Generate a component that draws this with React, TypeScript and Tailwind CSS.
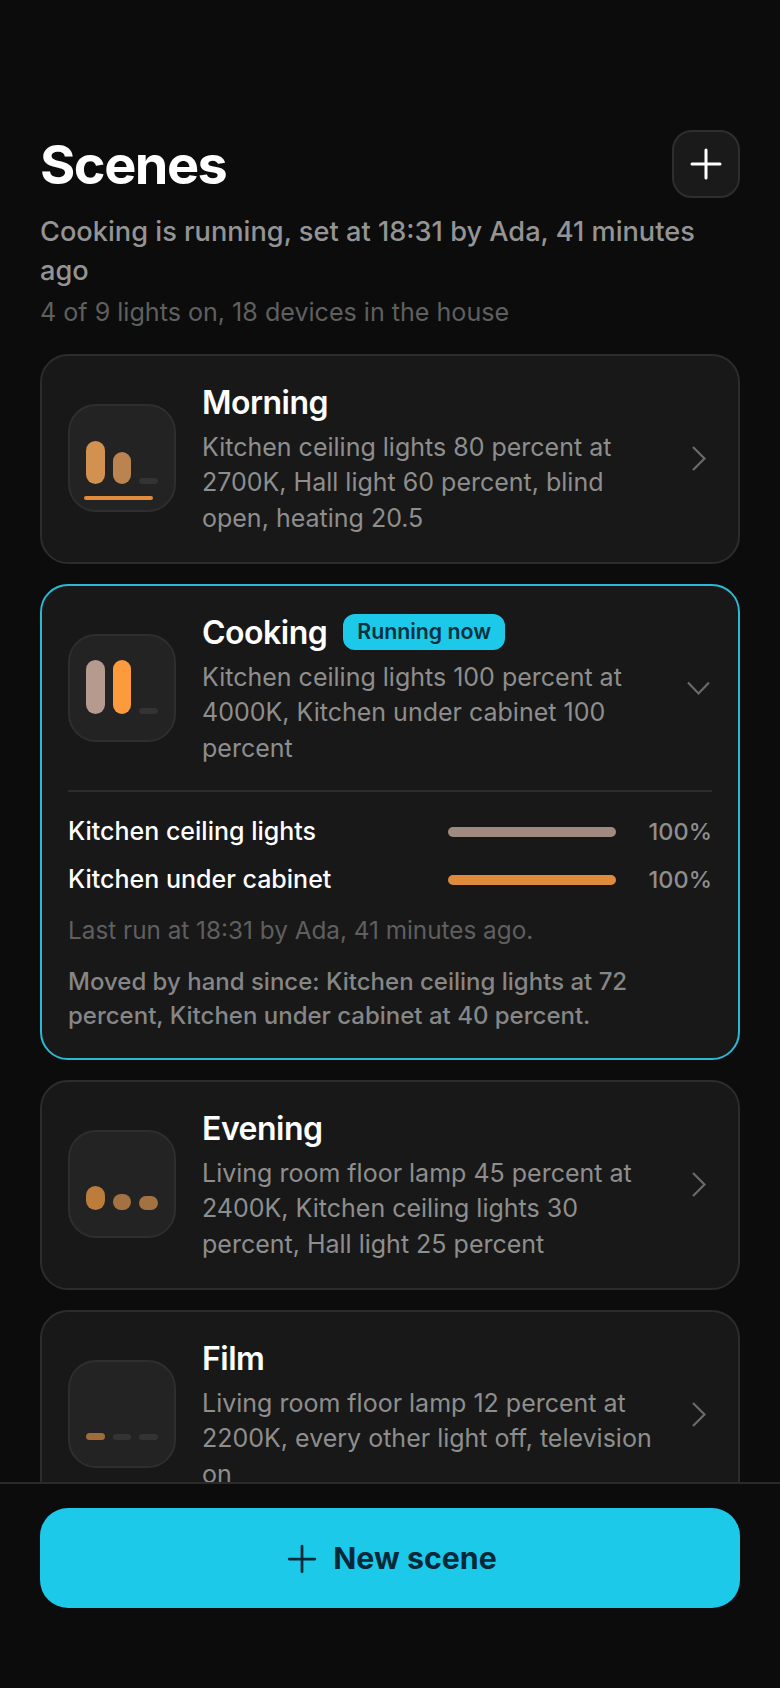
import React from 'react';
import { Plus } from 'lucide-react';

interface Bar {
    height: number;
    color: string;
}

interface Scene {
    name: string;
    detail: string;
    bars: Bar[];
    underline?: boolean;
}

const OFF = '#333334';

const scenes: Record<string, Scene> = {
    morning: {
        name: 'Morning',
        detail: 'Kitchen ceiling lights 80 percent at 2700K, Hall light 60 percent, blind open, heating 20.5',
        bars: [
            { height: 43, color: '#d2914f' },
            { height: 32, color: '#ba8350' },
            { height: 6, color: OFF },
        ],
        underline: true,
    },
    cooking: {
        name: 'Cooking',
        detail: 'Kitchen ceiling lights 100 percent at 4000K, Kitchen under cabinet 100 percent',
        bars: [
            { height: 54, color: '#b59a90' },
            { height: 54, color: '#fb9b3e' },
            { height: 6, color: OFF },
        ],
    },
    evening: {
        name: 'Evening',
        detail: 'Living room floor lamp 45 percent at 2400K, Kitchen ceiling lights 30 percent, Hall light 25 percent',
        bars: [
            { height: 24, color: '#bc7d3c' },
            { height: 16, color: '#a37142' },
            { height: 14, color: '#a37142' },
        ],
    },
    film: {
        name: 'Film',
        detail: 'Living room floor lamp 12 percent at 2200K, every other light off, television on',
        bars: [
            { height: 7, color: '#a06c39' },
            { height: 6, color: OFF },
            { height: 6, color: OFF },
        ],
    },
};

const SceneTile = ({ bars, underline }: { bars: Bar[]; underline?: boolean }) => (
    <div className="relative mt-[22px] flex h-[108px] w-[108px] shrink-0 items-end gap-2 self-start rounded-[28px] border-2 border-[#2e2e2e] bg-[#232323] px-4 pb-[26px]">
        {bars.map((bar, i) => (
            <div key={i} className="w-[18.67px] rounded-[10px]" style={{ height: bar.height, backgroundColor: bar.color }} />
        ))}
        {underline && <div className="absolute bottom-[10px] left-[14px] h-1 w-[69px] rounded-full bg-[#e08c3c]" />}
    </div>
);

const SceneHeader = ({ scene, open, badge }: { scene: Scene; open?: boolean; badge?: string }) => (
    <div className="flex items-center">
        <SceneTile bars={scene.bars} underline={scene.underline} />
        <div className="ml-[26px] min-w-0 flex-1">
            <div className="flex h-10 items-center gap-4">
                <h2 className="mt-[2px] text-[32px] font-semibold tracking-[-0.5px] text-white">{scene.name}</h2>
                {badge && (
                    <span className="flex h-9 items-center rounded-xl bg-[#1dc9e9] px-[14px] text-[21.3px] font-semibold text-[#07303c]">
                        {badge}
                    </span>
                )}
            </div>
            <p className="mt-2 text-[25px] leading-[35.33px] text-[#8e8e8e]">{scene.detail}</p>
        </div>
        <div className="ml-4 shrink-0 translate-x-[1px]">
            {open ? (
                <svg width="28" height="28" viewBox="0 0 28 28" fill="none" stroke="#6a6a6a" strokeWidth="2.2">
                    <path d="M3 7.5 L13.5 18.5 L24 7.5" />
                </svg>
            ) : (
                <svg width="28" height="28" viewBox="0 0 28 28" fill="none" stroke="#6a6a6a" strokeWidth="2.2">
                    <path d="M8 2 L19.5 13.5 L8 25" />
                </svg>
            )}
        </div>
    </div>
);

const LightRow = ({ name, color }: { name: string; color: string }) => (
    <div className="flex h-[34px] items-center">
        <span className="flex-1 text-[25px] font-medium text-white">{name}</span>
        <div className="h-[10px] w-[168px] rounded-full" style={{ backgroundColor: color }} />
        <span className="w-[96px] text-right text-[23.5px] font-medium text-[#8e8e8e]">100%</span>
    </div>
);

const App: React.FC = () => {
    return (
        <div className="flex h-[1688px] w-[780px] flex-col overflow-hidden bg-[#0c0c0c] font-['Inter',sans-serif]">
            <div className="min-h-0 flex-1 overflow-hidden px-10 pt-[130px]">
                {/* Header */}
                <div className="flex items-start justify-between">
                    <h1 className="text-[54px] leading-[70px] font-bold tracking-[-1.5px] text-white">Scenes</h1>
                    <button className="flex h-[68px] w-[68px] items-center justify-center rounded-[20px] border-2 border-[#2e2e2e] bg-[#1a1a1a] text-white">
                        <Plus size={48} strokeWidth={1.5} />
                    </button>
                </div>
                <p className="mt-[12px] text-[27.2px] leading-[39px] font-medium text-[#949494]">
                    Cooking is running, set at 18:31 by Ada, 41 minutes ago
                </p>
                <p className="mt-1 text-[25.1px] leading-[36px] text-[#5f5f5f]">4 of 9 lights on, 18 devices in the house</p>

                {/* Scenes */}
                <div className="mt-6 flex flex-col gap-5">
                    <div className="rounded-[28px] border-2 border-[#2c2c2c] bg-[#181818] p-[26px]">
                        <SceneHeader scene={scenes.morning} />
                    </div>

                    <div className="rounded-[28px] border-2 border-[#2bb8d4] bg-[#181818] px-[26px] pt-[26px] pb-[25px]">
                        <SceneHeader scene={scenes.cooking} open badge="Running now" />
                        <div className="mt-6 border-t-2 border-[#2c2c2c] pt-[23px]">
                            <div className="flex flex-col gap-[14px]">
                                <LightRow name="Kitchen ceiling lights" color="#a08a80" />
                                <LightRow name="Kitchen under cabinet" color="#e08a3c" />
                            </div>
                            <p className="mt-4 text-[24.3px] leading-[34px] text-[#5f5f5f]">
                                Last run at 18:31 by Ada, 41 minutes ago.
                            </p>
                            <p className="mt-[18px] text-[24px] leading-[34px] font-medium text-[#868686]">
                                Moved by hand since: Kitchen ceiling lights at 72 percent, Kitchen under cabinet at 40 percent.
                            </p>
                        </div>
                    </div>

                    <div className="rounded-[28px] border-2 border-[#2c2c2c] bg-[#181818] p-[26px]">
                        <SceneHeader scene={scenes.evening} />
                    </div>

                    <div className="rounded-[28px] border-2 border-[#2c2c2c] bg-[#181818] p-[26px]">
                        <SceneHeader scene={scenes.film} />
                    </div>
                </div>
            </div>

            {/* Footer */}
            <div className="shrink-0 border-t-2 border-[#2a2a2a] bg-[#0c0c0c] px-10 pt-6 pb-20">
                <button className="flex h-[100px] w-full items-center justify-center gap-[18px] rounded-[28px] bg-[#1dc9e9] pt-[2px] pl-[6px] text-[30.3px] font-bold text-[#06293a]">
                    <Plus size={44} strokeWidth={1.5} className="-mx-[9px]" />
                    <span>New scene</span>
                </button>
            </div>
        </div>
    );
};

export default App;
